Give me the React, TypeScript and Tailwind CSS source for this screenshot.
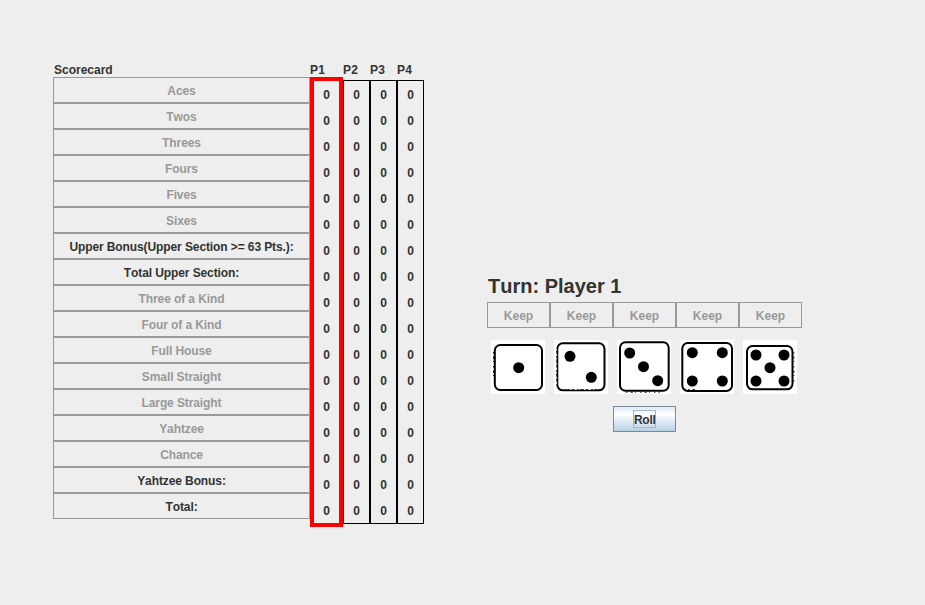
const rows = [
  { label: 'Aces' },
  { label: 'Twos' },
  { label: 'Threes' },
  { label: 'Fours' },
  { label: 'Fives' },
  { label: 'Sixes' },
  { label: 'Upper Bonus(Upper Section >= 63 Pts.):', summary: true },
  { label: 'Total Upper Section:', summary: true },
  { label: 'Three of a Kind' },
  { label: 'Four of a Kind' },
  { label: 'Full House' },
  { label: 'Small Straight' },
  { label: 'Large Straight' },
  { label: 'Yahtzee' },
  { label: 'Chance' },
  { label: 'Yahtzee Bonus:', summary: true },
  { label: 'Total:', summary: true },
];

type Die = { box: number[]; dots: number[][]; wear: string; wearColor: string };

// box is left, top, right, bottom of the outline; wear is the rough edge of the drawing
const dice: Die[] = [
  { box: [2.8, 4, 52, 51], dots: [[27.7, 27.7]], wear: 'M2.5 12V40', wearColor: '#000' },
  { box: [2.3, 2.3, 51.5, 51.3], dots: [[16, 16.3], [37.3, 37.3]], wear: 'M2.6 9V45M16 49.4H43', wearColor: '#fff' },
  { box: [2, 1.3, 52.7, 51.7], dots: [[12.7, 13], [26.5, 26.7], [40.7, 40.7]], wear: 'M9 52.2H43', wearColor: '#000' },
  { box: [1.3, 2, 53, 51.9], dots: [[12.3, 12.7], [42.3, 12.7], [12.3, 41], [42.3, 41]], wear: 'M8 49.6H16', wearColor: '#000' },
  { box: [3, 5, 50.5, 50.3], dots: [[13, 15], [41, 15], [27, 27.7], [13, 41], [41, 41]], wear: 'M50.8 12V42', wearColor: '#000' },
];

function DieFace({ die }: { die: Die }) {
  const [l, t, r, b] = die.box;
  return (
    <svg width="54" height="54" viewBox="0 0 54 54" className="block bg-white">
      <rect x={l + 1} y={t + 1} width={r - l - 2} height={b - t - 2} rx="5.5" fill="none" stroke="#000" strokeWidth="2" />
      <path d={die.wear} stroke={die.wearColor} strokeWidth="0.9" strokeDasharray="1.5 3 2.5 2 1 4" />
      {die.dots.map(([x, y]) => (
        <circle key={`${x}-${y}`} cx={x} cy={y} r="5.5" />
      ))}
    </svg>
  );
}

function Scores({ name, active = false }: { name: string; active?: boolean }) {
  return (
    <div className={active ? 'w-[33px]' : 'w-[27px]'}>
      <div className={`h-[15px] leading-[17px] tracking-[0.2px] ${active ? '' : 'mb-[3px]'}`}>{name}</div>
      <div className={active ? 'border-4 border-[#ff0000]' : 'border border-black'}>
        {rows.map((row) => (
          <div key={row.label} className="h-[26px] text-center leading-[29px]">0</div>
        ))}
      </div>
    </div>
  );
}

export default function App() {
  return (
    <main className="flex h-[605px] w-[925px] items-start overflow-hidden bg-[#eeeeee] pl-[53px] pt-[62px] font-['Liberation_Sans',Arial,sans-serif] text-xs font-bold text-[#333333] [font-kerning:none]">
      <section className="flex items-start">
        <div className="w-[257px]">
          <div className="h-[15px] pl-px leading-[17px]">Scorecard</div>
          {rows.map((row) => (
            <div
              key={row.label}
              className={`h-[26px] border border-[#999999] text-center leading-[27px] tracking-[-0.1px] ${row.summary ? 'text-[#333333]' : 'text-[#999999]'}`}
            >
              {row.label}
            </div>
          ))}
        </div>
        <Scores name="P1" active />
        <Scores name="P2" />
        <Scores name="P3" />
        <Scores name="P4" />
      </section>
      <section className="ml-[63px] mt-[210px] w-[315px]">
        <h1 className="h-[30px] whitespace-nowrap pl-px text-[20px] leading-[28px]">Turn: Player 1</h1>
        <div className="flex">
          {dice.map((_, i) => (
            <button key={i} className="h-[26px] w-[63px] border border-[#999999] text-center leading-[27px] text-[#999999]">
              Keep
            </button>
          ))}
        </div>
        <div className="mt-3 flex gap-[9px] pl-1">
          {dice.map((die, i) => (
            <DieFace key={i} die={die} />
          ))}
        </div>
        <button className="mx-auto mt-3 flex h-[26px] w-[63px] items-center justify-center border border-[#7a8a99] bg-linear-to-b from-[#dde8f3] via-white via-30% to-[#b8cfe5]">
          <span className="h-[18px] w-[23px] border border-[#a3b8cc] text-center leading-[18px] tracking-[-0.3px]">Roll</span>
        </button>
      </section>
    </main>
  );
}
